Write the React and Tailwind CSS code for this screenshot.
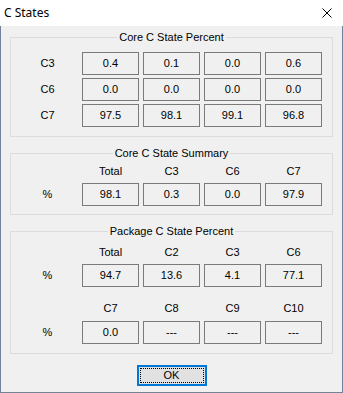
import React from "react";

const font = { fontFamily: '"Liberation Sans", Arial, sans-serif' };

const grid = "grid grid-cols-[67px_57px_57px_57px_57px] gap-x-[4px]";

function Cell({ value }) {
  return (
    <div className="h-[23px] border border-[#7a7a7a] flex items-center justify-center text-[11px] text-black leading-none">
      {value}
    </div>
  );
}

function Label({ children }) {
  return (
    <div className="h-[23px] flex items-center justify-center pl-[6px] text-[11px] text-black">
      {children}
    </div>
  );
}

function Header({ items }) {
  return (
    <div className={`${grid} h-[13px] items-center`}>
      <div />
      {items.map((h) => (
        <div key={h} className="text-center text-[11px] leading-[13px] text-black">
          {h}
        </div>
      ))}
    </div>
  );
}

function Group({ title, className, children }) {
  return (
    <fieldset className={`border border-[#dcdcdc] px-0 m-0 min-w-0 ${className}`}>
      <legend className="mx-auto px-[2px] text-[11px] leading-[13px] text-black">{title}</legend>
      {children}
    </fieldset>
  );
}

export default function App() {
  const core = [
    ["C3", ["0.4", "0.1", "0.0", "0.6"]],
    ["C6", ["0.0", "0.0", "0.0", "0.0"]],
    ["C7", ["97.5", "98.1", "99.1", "96.8"]],
  ];

  return (
    <div className="w-[343px] h-[393px] flex flex-col select-none" style={font}>
      {/* Title bar */}
      <div className="h-[26px] bg-white flex items-center justify-between pl-[4px] pr-[11px]">
        <span className="text-[12px] text-black" style={{ fontFamily: '"Noto Sans", "Open Sans", sans-serif' }}>
          C States
        </span>
        <svg width="10" height="10" viewBox="0 0 10 10">
          <path d="M0.5 0.5 L9.5 9.5 M9.5 0.5 L0.5 9.5" stroke="#000" strokeWidth="1" />
        </svg>
      </div>

      {/* Body */}
      <div className="flex-1 bg-[#f0f0f0] border-x border-b border-[#71839a] pt-[5px] px-[9px] flex flex-col">
        <Group title="Core C State Percent" className="pt-[8px] pb-[9px]">
          <div className="flex flex-col gap-y-[3px]">
            {core.map(([label, vals]) => (
              <div key={label} className={grid}>
                <Label>{label}</Label>
                {vals.map((v, i) => (
                  <Cell key={i} value={v} />
                ))}
              </div>
            ))}
          </div>
        </Group>

        <Group title="Core C State Summary" className="mt-[10px] pt-[5px] pb-[8px]">
          <Header items={["Total", "C3", "C6", "C7"]} />
          <div className={`${grid} mt-[5px]`}>
            <Label>%</Label>
            {["98.1", "0.3", "0.0", "97.9"].map((v, i) => (
              <Cell key={i} value={v} />
            ))}
          </div>
        </Group>

        <Group title="Package C State Percent" className="mt-[10px] pt-[8px] pb-[9px]">
          <Header items={["Total", "C2", "C3", "C6"]} />
          <div className={`${grid} mt-[5px]`}>
            <Label>%</Label>
            {["94.7", "13.6", "4.1", "77.1"].map((v, i) => (
              <Cell key={i} value={v} />
            ))}
          </div>
          <div className="mt-[15px]">
            <Header items={["C7", "C8", "C9", "C10"]} />
          </div>
          <div className={`${grid} mt-[6px]`}>
            <Label>%</Label>
            {["0.0", "---", "---", "---"].map((v, i) => (
              <Cell key={i} value={v} />
            ))}
          </div>
        </Group>

        <div className="flex justify-center mt-[11px]">
          <button className="w-[70px] h-[21px] bg-[#e1e1e1] border-2 border-[#0078d7] p-0 flex">
            <span className="flex-1 m-[1px] border border-dotted border-black flex items-center justify-center text-[11px] text-black leading-none">
              OK
            </span>
          </button>
        </div>
      </div>
    </div>
  );
}
